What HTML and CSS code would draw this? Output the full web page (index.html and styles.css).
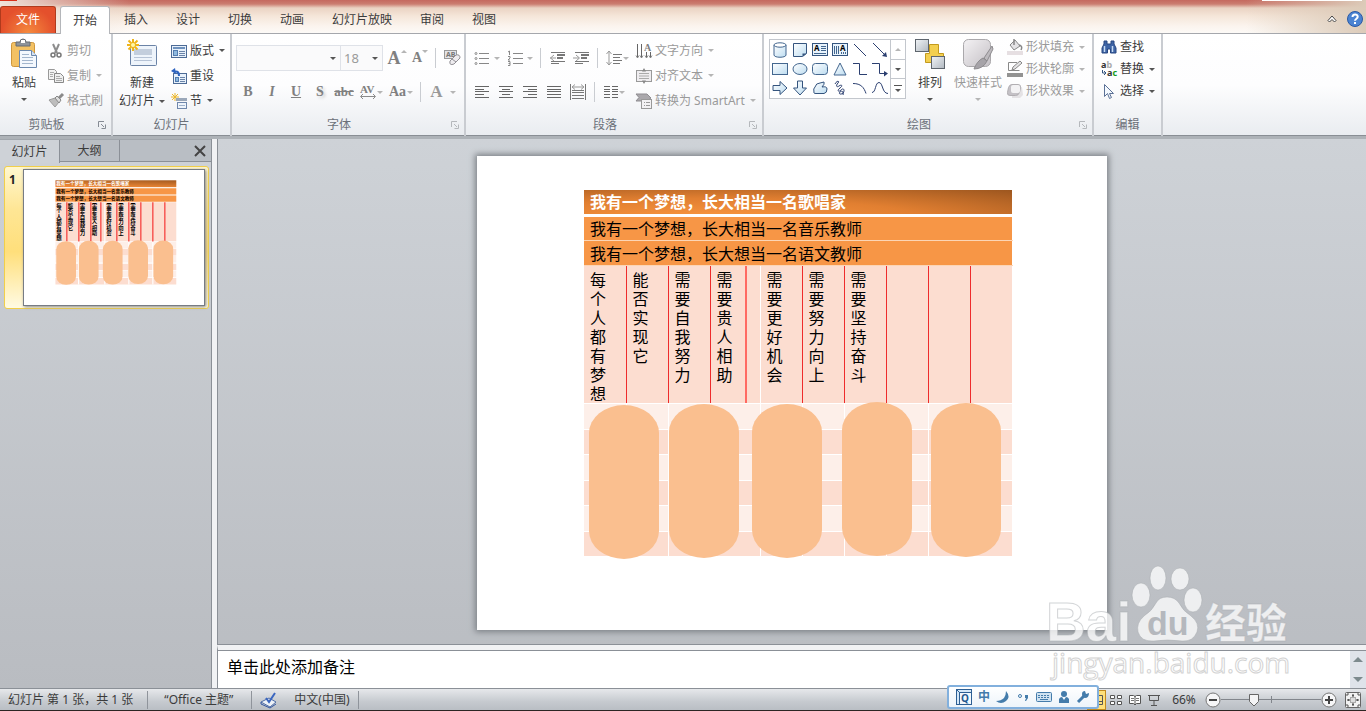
FILE: index.html
```
<!DOCTYPE html>
<html lang="zh-CN">
<head>
  <meta charset="UTF-8" />
  <meta name="viewport" content="width=device-width, initial-scale=1.0"/>
  <title>幻灯片</title>
  <link rel="stylesheet" href="styles.css">
</head>
<body>
  <svg class="defs" width="0" height="0">
    <symbol id="launcher" viewBox="0 0 8 8"><path d="M.5 6V.5H6" fill="none" stroke="currentColor"/><path d="M3 3l3 3M7.5 3.500v4h-4" fill="none" stroke="currentColor"/></symbol>
    <linearGradient id="blue" x2="1" y2="1"><stop offset="0" stop-color="#fff"/><stop offset="1" stop-color="#bcdcf0"/></linearGradient>
    <linearGradient id="grey" x2="1" y2="1"><stop offset="0" stop-color="#f4f2f4"/><stop offset="1" stop-color="#c4c0c5"/></linearGradient>
    <linearGradient id="silver" x2="1" y2="1"><stop offset="0" stop-color="#f1f4f7"/><stop offset="1" stop-color="#b1b8c0"/></linearGradient>
  </svg>

  <!-- Tabs -->
  <header class="tabbar">
    <nav class="tabs">
      <button class="tab file">文件</button>
      <button class="tab active">开始</button>
      <button class="tab">插入</button>
      <button class="tab">设计</button>
      <button class="tab">切换</button>
      <button class="tab">动画</button>
      <button class="tab">幻灯片放映</button>
      <button class="tab">审阅</button>
      <button class="tab">视图</button>
    </nav>
    <div class="tab-tools">
      <button aria-label="最小化功能区"><svg width="10" height="8" viewBox="0 0 10 8"><path d="M1 5.500L5 1l4 4.500-1.500 1.500L5 4.500 2.500 7z" fill="#fff" stroke="#444"/></svg></button>
      <button aria-label="帮助"><svg width="16" height="16" viewBox="0 0 16 16"><circle cx="8" cy="8" r="7.500" fill="#4b83d2" stroke="#2a59a4"/><path d="M5.500 6C5.500 2.700 10.700 2.700 10.700 5.800 10.700 7.700 8 7.700 8 9.800" fill="none" stroke="#fff" stroke-width="2"/><rect x="7" y="11" width="2" height="2" fill="#fff"/></svg></button>
    </div>
  </header>

  <!-- Ribbon -->
  <div class="ribbon">
    <section class="group clipboard">
      <div class="group-body">
        <button class="big">
          <svg width="28" height="32" viewBox="0 0 28 32"><rect x="1.500" y="4.500" width="23" height="24" rx="2" fill="#f3c163" stroke="#cf973c"/><path d="M6 4h4a3 3 0 0 1 6 0h4v4H6z" fill="#8e949b" stroke="#666c73"/><rect x="11" y="2" width="4" height="3" fill="#fff"/><path d="M9.500 12.500h12l5 5v12h-17z" fill="#f4f8fd" stroke="#6c89ae"/><path d="M21.500 12.500v5h5" fill="#d5e2f2" stroke="#6c89ae"/><path d="M12 16.500h7M12 19.500h11M12 22.500h11M12 25.500h11" stroke="#a3b6cd"/></svg>
          <span>粘贴</span><i class="caret"></i>
        </button>
        <div class="stack">
          <button disabled><svg width="16" height="16" viewBox="0 0 16 16"><path d="M5 1l4 9M11 1L7 10" stroke="#8d8d8d" stroke-width="2"/><circle cx="5" cy="12" r="2" fill="none" stroke="#777" stroke-width="1.500"/><circle cx="11" cy="12" r="2" fill="none" stroke="#777" stroke-width="1.500"/></svg>剪切</button>
          <button disabled><svg width="16" height="16" viewBox="0 0 16 16"><path d="M.5 1.500h6l2 2v8h-8z" fill="#f2f2f2" stroke="#999"/><path d="M6.500 5.500h6l3 3v6h-9z" fill="#eee" stroke="#888"/><path d="M2 4.500h4M2 6.500h3M2 8.500h3M8 8.500h4M8 10.500h6M8 12.500h6" stroke="#aaa"/></svg>复制<i class="caret"></i></button>
          <button disabled><svg width="16" height="16" viewBox="0 0 16 16"><path d="M1 7l6-2 4 4-4 5z" fill="#bdbdbd" stroke="#9c9c9c"/><path d="M7 5l2-2 4 4-2 3z" fill="#ddd" stroke="#888"/><path d="M11 5l4-4" stroke="#8a8a8a" stroke-width="3"/></svg>格式刷</button>
        </div>
      </div>
      <footer><span>剪贴板</span><button aria-label="剪贴板选项"><svg width="8" height="8"><use href="#launcher"/></svg></button></footer>
    </section>

    <section class="group slides">
      <div class="group-body">
        <button class="big new-slide">
          <svg width="32" height="32" viewBox="0 0 32 32"><rect x="4.500" y="7.500" width="26" height="20" rx="1" fill="#eef4fb" stroke="#6b83a6"/><rect x="8" y="11" width="18" height="6" fill="#c3cedd"/><path d="M8 19.500h18M8 22.500h18" stroke="#b6c3d6"/><path d="M7 1v12M1 7h12M2.500 2.500l9 9M11.500 2.500l-9 9" stroke="#efb51c" stroke-width="2"/><circle cx="7" cy="7" r="2" fill="#fff7a8"/></svg>
          <span>新建</span><span class="with-caret">幻灯片<i class="caret"></i></span>
        </button>
        <div class="stack">
          <button><svg width="16" height="16" viewBox="0 0 16 16"><rect x=".5" y="2.500" width="15" height="12" fill="#e8f1fb" stroke="#4d6b96"/><rect x="2" y="4" width="12" height="2" fill="#6f92bd"/><rect x="2.500" y="7.500" width="4" height="5" fill="#8fb9df" stroke="#537db0"/><path d="M8 8.500h6M8 10.500h6M8 12.500h6" stroke="#6a84a9"/></svg>版式<i class="caret"></i></button>
          <button><svg width="16" height="16" viewBox="0 0 16 16"><rect x="2.500" y="5.500" width="13" height="10" fill="#e8f1fb" stroke="#4d6b96"/><rect x="4.500" y="9.500" width="3" height="4" fill="#8fb9df" stroke="#537db0"/><path d="M9 9.500h5M9 11.500h5M9 13.500h5" stroke="#6a84a9"/><path d="M8 8c0-5-3-5-5-4" fill="none" stroke="#2d63c0" stroke-width="2"/><path d="M0 3l4-3 1 6z" fill="#2d63c0"/></svg>重设</button>
          <button><svg width="16" height="16" viewBox="0 0 16 16"><path d="M4 0v8M0 4h8M1 1l6 6M7 1L1 7" stroke="#ecb72a"/><rect x="5" y="5" width="11" height="3" fill="#9aa7b9"/><rect x="6.500" y="9.500" width="9" height="6" fill="#eef4fb" stroke="#6f87ac"/><path d="M8 12.500h6" stroke="#9fb2cc"/></svg>节<i class="caret"></i></button>
        </div>
      </div>
      <footer><span>幻灯片</span></footer>
    </section>

    <section class="group font">
      <div class="group-body rows">
        <div class="row">
          <label class="combo family"><select aria-label="字体" disabled><option></option></select><i class="caret"></i></label>
          <label class="combo size"><select aria-label="字号" disabled><option>18</option></select><i class="caret"></i></label>
          <button class="tool serif grow" aria-label="增大字号" disabled>A<i class="caret up"></i></button>
          <button class="tool serif shrink" aria-label="减小字号" disabled>A<i class="caret"></i></button>
          <i class="rule"></i>
          <button class="tool" aria-label="清除格式" disabled><svg width="18" height="18" viewBox="0 0 18 18"><rect x="1.500" y="1.500" width="12" height="8" fill="#e3e3e6" stroke="#999"/><text x="3" y="8" font-size="7" font-weight="bold" fill="#777">AB</text><path d="M7 12l6-6q4-1 4 3l-6 6q-5 2-4-3z" fill="#eeecef" stroke="#929096"/><path d="M9 10l4 3" stroke="#929096"/></svg></button>
        </div>
        <div class="row">
          <button class="tool serif" disabled>B</button>
          <button class="tool serif italic" disabled>I</button>
          <button class="tool serif underline" disabled>U</button>
          <button class="tool serif shadow" disabled>S</button>
          <button class="tool serif strike" disabled>abc</button>
          <button class="tool wide" aria-label="字符间距" disabled><svg width="16" height="16" viewBox="0 0 16 16"><text class="svg-serif" x="0" y="9" font-size="11">AV</text><path d="M1 12.500h14M3 10l-2.500 2.500L3 15M13 10l2.500 2.500L13 15" fill="none" stroke="#8a8a8a"/></svg><i class="caret"></i></button>
          <button class="tool wide serif change-case" disabled>Aa<i class="caret"></i></button>
          <i class="rule"></i>
          <button class="tool wide serif color" aria-label="字体颜色" disabled>A<i class="caret"></i></button>
        </div>
      </div>
      <footer><span>字体</span><button aria-label="字体选项" disabled><svg width="8" height="8"><use href="#launcher"/></svg></button></footer>
    </section>

    <section class="group paragraph">
      <div class="group-body">
        <div class="rows">
          <div class="row">
            <button class="tool list" aria-label="项目符号" disabled><svg width="16" height="16" viewBox="0 0 16 16"><path d="M5 3.500h10M5 8.500h10M5 13.500h10" stroke="#888"/><g fill="none" stroke="#8a8a8a"><circle cx="2" cy="3.500" r="1"/><circle cx="2" cy="8.500" r="1"/><circle cx="2" cy="13.500" r="1"/></g></svg><i class="caret"></i></button>
            <button class="tool list" aria-label="编号" disabled><svg width="16" height="16" viewBox="0 0 16 16"><path d="M6 3.500h10M6 8.500h10M6 13.500h10" stroke="#888"/><path d="M1 2l1.500-1v4M1 6.500h2v1.500l-2 2h2M1 11.500h2v4h-2M1.500 13.500h1.500" fill="none" stroke="#888"/></svg><i class="caret"></i></button>
            <i class="rule"></i>
            <button class="tool" aria-label="降低列表级别" disabled><svg width="16" height="16" viewBox="0 0 16 16"><path d="M2 2.500h14M2 11.500h14M2 13.500h8" stroke="#777"/><path d="M8 5h8M8 8h6" stroke="#777" stroke-width="2"/><path d="M5 5L1.500 8 5 11M1 8h6" stroke="#999" fill="none"/></svg></button>
            <button class="tool" aria-label="提高列表级别" disabled><svg width="16" height="16" viewBox="0 0 16 16"><path d="M2 2.500h14M2 11.500h14M2 13.500h8" stroke="#777"/><path d="M8 5h8M8 8h6" stroke="#777" stroke-width="2"/><path d="M3 5l3.500 3L3 11M0 8h6" stroke="#999" fill="none"/></svg></button>
            <i class="rule"></i>
            <button class="tool wide" aria-label="行距" disabled><svg width="16" height="16" viewBox="0 0 16 16"><path d="M7 4.500h9M7 7.500h7M7 10.500h9M7 13.500h7" stroke="#777"/><path d="M3 1v14M.5 4L3 1l2.500 3M.5 12L3 15l2.500-3" fill="none" stroke="#999"/></svg><i class="caret"></i></button>
          </div>
          <div class="row">
            <button class="tool" aria-label="左对齐" disabled><svg width="14" height="12" viewBox="0 0 14 12"><path d="M0 .5h14M0 3.500h9M0 5.500h14M0 8.500h9M0 11.500h14" stroke="#666"/></svg></button>
            <button class="tool" aria-label="居中" disabled><svg width="14" height="12" viewBox="0 0 14 12"><path d="M0 .5h14M3 3.500h8M0 5.500h14M3 8.500h8M0 11.500h14" stroke="#666"/></svg></button>
            <button class="tool" aria-label="右对齐" disabled><svg width="14" height="12" viewBox="0 0 14 12"><path d="M0 .5h14M5 3.500h9M0 5.500h14M5 8.500h9M0 11.500h14" stroke="#666"/></svg></button>
            <button class="tool" aria-label="两端对齐" disabled><svg width="14" height="12" viewBox="0 0 14 12"><path d="M0 .5h14M0 3.500h14M0 5.500h14M0 8.500h14M0 11.500h14" stroke="#666"/></svg></button>
            <button class="tool" aria-label="分散对齐" disabled><svg width="16" height="16" viewBox="0 0 16 16"><path d="M.5 0v16M15.500 0v16M2 6.500h12M2 8.500h12M2 11.500h12M2 14.500h12" stroke="#777"/><path d="M2 3h12M5 .5L2 3l3 2.500M11 .5L14 3l-3 2.500" fill="none" stroke="#999"/></svg></button>
            <i class="rule"></i>
            <button class="tool wide" aria-label="分栏" disabled><svg width="14" height="12" viewBox="0 0 14 12"><path d="M0 .5h6M8 .5h6M0 3.500h6M8 3.500h6M0 5.500h6M8 5.500h6M0 8.500h6M8 8.500h6M0 11.500h6M8 11.500h6" stroke="#666"/></svg><i class="caret"></i></button>
          </div>
        </div>
        <div class="stack">
          <button disabled><svg width="16" height="16" viewBox="0 0 16 16"><path d="M1.500 1v14M5.500 1v14M10.500 9v6M14.500 9v6" stroke="#666"/><path d="M0 12.500l1.500 2.500L3 12.500M4 12.500l1.500 2.500L7 12.500M9 12.500l1.500 2.500 1.500-2.500M13 12.500l1.500 2.500 1.500-2.500" stroke="#888" fill="none"/><text class="svg-serif" x="8" y="8" font-size="10">A</text></svg>文字方向<i class="caret"></i></button>
          <button disabled><svg width="16" height="16" viewBox="0 0 16 16"><rect x=".5" y="2.500" width="15" height="11" fill="#efedf0" stroke="#999"/><path d="M3 5.500h10M3 8h10M3 10.500h10" stroke="#aaa"/><path d="M6 3.500L8 0l2 3.500zM6 12.500L8 16l2-3.500z" fill="#888"/></svg>对齐文本<i class="caret"></i></button>
          <button disabled><svg width="16" height="16" viewBox="0 0 16 16"><path d="M0 1h11l4 4-4 3H0l3-3.500z" fill="#aaa8ac" stroke="#8f8d91"/><rect x="5.500" y="6.500" width="10" height="9" fill="#f2f1f3" stroke="#999"/><path d="M8 9.500h1M8 12.500h1M10 9.500h4M10 12.500h4" stroke="#999"/></svg>转换为 SmartArt<i class="caret"></i></button>
        </div>
      </div>
      <footer><span>段落</span><button aria-label="段落选项" disabled><svg width="8" height="8"><use href="#launcher"/></svg></button></footer>
    </section>

    <section class="group drawing">
      <div class="group-body">
        <div class="gallery">
          <div class="shapes">
            <button aria-label="圆柱形"><svg width="16" height="16" viewBox="0 0 16 16"><path d="M2 3v10c0 3 12 3 12 0V3" fill="url(#blue)" stroke="#44678f"/><ellipse cx="8" cy="3" rx="6" ry="2.200" fill="#fff" stroke="#44678f"/></svg></button>
            <button aria-label="折角形"><svg width="16" height="16" viewBox="0 0 16 16"><path d="M1.500 1.500h13v10l-4 3h-9z" fill="url(#blue)" stroke="#34547e"/><path d="M14.500 11.500h-4v3z" fill="#34547e"/></svg></button>
            <button aria-label="文本框"><svg width="16" height="16" viewBox="0 0 16 16"><rect x=".5" y="1.500" width="15" height="12" fill="#e8f3fc" stroke="#34547e"/><text x="2" y="9" font-size="8" font-weight="bold">A</text><path d="M9 4.500h5M9 6.500h5M9 8.500h5M2 11.500h12" stroke="#44678f"/></svg></button>
            <button aria-label="竖排文本框"><svg width="16" height="16" viewBox="0 0 16 16"><rect x=".5" y="1.500" width="15" height="12" fill="#e8f3fc" stroke="#34547e"/><text x="8" y="9" font-size="8" font-weight="bold">A</text><path d="M2.500 4v8M4.500 4v8M6.500 4v8M9.500 10v2M11.500 10v2M13.500 10v2" stroke="#44678f"/></svg></button>
            <button aria-label="直线"><svg width="16" height="16" viewBox="0 0 16 16"><path d="M2 2l12 12" stroke="#2b3f70"/></svg></button>
            <button aria-label="箭头"><svg width="16" height="16" viewBox="0 0 16 16"><path d="M1 1l12 12" stroke="#2b3f70"/><path d="M15 15l-5-1 4-4z" fill="#2b3f70"/></svg></button>
            <button aria-label="矩形"><svg width="16" height="16" viewBox="0 0 16 16"><rect x=".5" y="2.500" width="15" height="11" fill="url(#blue)" stroke="#44678f"/></svg></button>
            <button aria-label="椭圆"><svg width="16" height="16" viewBox="0 0 16 16"><ellipse cx="8" cy="8" rx="7" ry="5.500" fill="url(#blue)" stroke="#44678f"/></svg></button>
            <button aria-label="圆角矩形"><svg width="16" height="16" viewBox="0 0 16 16"><rect x=".5" y="2.500" width="15" height="11" rx="3" fill="url(#blue)" stroke="#44678f"/></svg></button>
            <button aria-label="三角形"><svg width="16" height="16" viewBox="0 0 16 16"><path d="M8 2l6 12H2z" fill="url(#blue)" stroke="#44678f"/></svg></button>
            <button aria-label="肘形连接符"><svg width="16" height="16" viewBox="0 0 16 16"><path d="M1 2.500h6.500v11H15" fill="none" stroke="#2b3f70"/></svg></button>
            <button aria-label="肘形箭头"><svg width="16" height="16" viewBox="0 0 16 16"><path d="M0 2.500h7.500v10H13" fill="none" stroke="#2b3f70"/><path d="M12 10l4 2.500-4 3z" fill="#2b3f70"/></svg></button>
            <button aria-label="右箭头"><svg width="16" height="16" viewBox="0 0 16 16"><path d="M1 5.500h7V1.500L15 8l-7 6.500v-4H1z" fill="url(#blue)" stroke="#34547e"/></svg></button>
            <button aria-label="下箭头"><svg width="16" height="16" viewBox="0 0 16 16"><path d="M5.500 1v7h-4L8 15l6.500-7h-4V1z" fill="url(#blue)" stroke="#34547e"/></svg></button>
            <button aria-label="任意多边形"><svg width="16" height="16" viewBox="0 0 16 16"><path d="M2 13q-1-5 1-6 1-4 5-4l4-1q1 2-2 5 5-1 5 2 0 4-3 4.500H4q-2 0-2-.5z" fill="url(#blue)" stroke="#34547e" stroke-linejoin="round"/></svg></button>
            <button aria-label="自由曲线"><svg width="16" height="16" viewBox="0 0 16 16"><path d="M3 4c2-4 5-3 3-1S4 8 7 6s4 0 1 2-2 5 1 2 4 1 2 3-5 1-3-1 4 0 3 3" fill="none" stroke="#2b3f70"/></svg></button>
            <button aria-label="弧形"><svg width="16" height="16" viewBox="0 0 16 16"><path d="M1 3.500c8 0 11 4 13 10" fill="none" stroke="#2b3f70"/></svg></button>
            <button aria-label="曲线"><svg width="16" height="16" viewBox="0 0 16 16"><path d="M0 12.500c4 0 3-10 7-10s3 11 9 11" fill="none" stroke="#2b3f70"/></svg></button>
          </div>
          <div class="gallery-scroll">
            <button aria-label="上一行" disabled><i class="caret up"></i></button>
            <button aria-label="下一行"><i class="caret"></i></button>
            <button class="more" aria-label="其他"><i class="caret"></i></button>
          </div>
        </div>
        <button class="big">
          <svg width="32" height="32" viewBox="0 0 32 32"><path d="M15.500 6.500h9v9h5v9h-18v-9h4z" fill="#f3cf4f" stroke="#c39a1d"/><rect x="1.500" y="1.500" width="13" height="12" fill="url(#silver)" stroke="#5e656d"/><rect x="17.500" y="18.500" width="13" height="12" fill="url(#silver)" stroke="#5e656d"/></svg>
          <span>排列</span><i class="caret"></i>
        </button>
        <button class="big quick" disabled>
          <svg width="32" height="32" viewBox="0 0 32 32"><rect x="1.500" y="1.500" width="27" height="27" rx="5" fill="url(#grey)" stroke="#aaa8ab"/><path d="M30 8l-8 12 3 3 6-12z" fill="#bdbabe" stroke="#8d8b8e"/><path d="M21 20q-6 3-9 11 9 0 13-8z" fill="#a6a3a8" stroke="#8d8b8e"/></svg>
          <span>快速样式</span><i class="caret"></i>
        </button>
        <div class="stack tight">
          <button disabled><svg width="16" height="16" viewBox="0 0 16 16"><path d="M3 6l5-5 5 6-6 4z" fill="#e4e3e5" stroke="#888"/><path d="M7 0v6M12 6q4 1 2 5" stroke="#888" fill="none" stroke-width="1.500"/><rect y="12" width="16" height="4" fill="#e6dfe2"/></svg>形状填充<i class="caret"></i></button>
          <button disabled><svg width="16" height="16" viewBox="0 0 16 16"><path d="M10 1.500H1.500v8h11" fill="none" stroke="#888"/><path d="M5 9l1-3 7-6 2 2-7 6z" fill="#e4e3e5" stroke="#888"/><rect y="12" width="16" height="4" fill="#929292"/></svg>形状轮廓<i class="caret"></i></button>
          <button disabled><svg width="16" height="16" viewBox="0 0 16 16"><path d="M5 6l10-2 1 8-3 3H5z" fill="#e4e2e5"/><path d="M5 1.500h6q3 0 2.500 3l-1 5q-1 3-4 3H3q-3 0-2.500-3l1-5q1-3 3.500-3z" fill="#c4c1c6" stroke="#b1aeb2"/><rect x="4" y="2" width="9" height="8" rx="2" fill="#f3f2f4"/></svg>形状效果<i class="caret"></i></button>
        </div>
      </div>
      <footer><span>绘图</span><button aria-label="绘图选项" disabled><svg width="8" height="8"><use href="#launcher"/></svg></button></footer>
    </section>

    <section class="group editing">
      <div class="group-body">
        <div class="stack tight">
          <button><svg width="16" height="16" viewBox="0 0 16 16"><path d="M3 2h3v3h4V2h3v3l2 4v5H9.500v-4h-3v4H1V9l2-4z" fill="#3e64a5" stroke="#274680"/><path d="M3.500 7v6M11.500 7v6" stroke="#c8dcf4" stroke-width="1.500"/></svg>查找</button>
          <button><svg width="16" height="18" viewBox="0 0 16 18"><g font-size="9" font-weight="bold"><text x="0" y="8" fill="#333">a<tspan fill="#aaa">b</tspan></text><text x="6" y="16" fill="#333">a<tspan fill="#159a1a">c</tspan></text></g><path d="M1.500 10v3H4M3 11l2 2-2 2" fill="none" stroke="#34547e"/></svg>替换<i class="caret"></i></button>
          <button><svg width="16" height="16" viewBox="0 0 16 16"><path d="M3.500 1.500v12l3-3 2 5 2-1-2-4h4z" fill="#f4f9ff" stroke="#5b7196"/></svg>选择<i class="caret"></i></button>
        </div>
      </div>
      <footer><span>编辑</span></footer>
    </section>
  </div>

  <!-- Workspace -->
  <main class="workspace">
    <aside class="panel">
      <div class="panel-tabs">
        <button class="active">幻灯片</button>
        <button>大纲</button>
        <button class="close" aria-label="关闭"><svg width="12" height="12" viewBox="0 0 12 12"><path d="M1 1l10 10M11 1L1 11" stroke="#444" stroke-width="2"/></svg></button>
      </div>
      <a class="thumb" href="#slide">
        <span>1</span>
        <svg class="thumb-page" viewBox="0 0 630 474">
          <defs><linearGradient id="head" x1="0.600" y1="1" x2="1" y2="0"><stop offset="0" stop-color="#ee8836"/><stop offset="1" stop-color="#a35a20"/></linearGradient></defs>
          <rect x="110" y="36" width="423" height="24" fill="url(#head)"/>
          <path d="M110 64h423v22H110zM110 89h423v22H110z" fill="#f79646"/>
          <path d="M110 113h423v136H110zM110 276h423v23H110zM110 328h423v22H110zM110 378h423v23H110z" fill="#fcddd0"/>
          <path d="M110 251h423v23H110zM110 301h423v23H110zM110 352h423v23H110z" fill="#fdefe9"/>
          <path d="M191 251v150M283 113v288M367 251v150M451 251v150" stroke="#fff" stroke-width="4"/>
          <path d="M150 113v137M192 113v137M234 113v137M269 113v137M325 113v137M367 113v137M409 113v137M451 113v137M493 113v137" stroke="#f52f2f" stroke-width="4"/>
          <g class="thumb-line">
            <text x="113" y="53" fill="#fff">我有一个梦想，长大相当一名歌唱家</text>
            <text x="113" y="80">我有一个梦想，长大相当一名音乐教师</text>
            <text x="113" y="106">我有一个梦想，长大想当一名语文教师</text>
          </g>
          <g class="thumb-column">
            <text x="122" y="116">每个人都有梦想</text>
            <text x="163" y="116">能否实现它</text>
            <text x="205" y="116">需要自我努力</text>
            <text x="247" y="116">需要贵人相助</text>
            <text x="297" y="116">需要更好机会</text>
            <text x="339" y="116">需要努力向上</text>
            <text x="381" y="116">需要坚持奋斗</text>
          </g>
          <g fill="#fabf8f">
            <rect x="113" y="249" width="69" height="153" rx="34" ry="28"/>
            <rect x="192" y="248" width="69" height="153" rx="34" ry="28"/>
            <rect x="276" y="248" width="69" height="153" rx="34" ry="28"/>
            <rect x="365" y="246" width="69" height="153" rx="34" ry="28"/>
            <rect x="453" y="247" width="69" height="153" rx="34" ry="28"/>
          </g>
        </svg>
      </a>
    </aside>

    <div class="editor">
      <div class="canvas">
        <article class="slide" id="slide">
          <table>
            <colgroup><col><col><col><col class="broad"><col><col><col><col><col><col></colgroup>
            <tr class="head"><th colspan="10">我有一个梦想，长大相当一名歌唱家</th></tr>
            <tr class="line"><td colspan="10">我有一个梦想，长大相当一名音乐教师</td></tr>
            <tr class="line"><td colspan="10">我有一个梦想，长大想当一名语文教师</td></tr>
            <tr class="columns">
              <td><p>每个人都有梦想</p></td>
              <td><p>能否实现它</p></td>
              <td><p>需要自我努力</p></td>
              <td class="drawn"><p>需要贵人相助</p></td>
              <td><p>需要更好机会</p></td>
              <td><p>需要努力向上</p></td>
              <td><p>需要坚持奋斗</p></td>
              <td></td><td></td><td></td>
            </tr>
            <tr class="pale"><td></td><td></td><td></td><td></td><td></td><td></td><td></td><td></td><td></td><td></td></tr>
            <tr><td></td><td></td><td></td><td></td><td></td><td></td><td></td><td></td><td></td><td></td></tr>
            <tr class="pale"><td></td><td></td><td></td><td></td><td></td><td></td><td></td><td></td><td></td><td></td></tr>
            <tr><td></td><td></td><td></td><td></td><td></td><td></td><td></td><td></td><td></td><td></td></tr>
            <tr class="pale"><td></td><td></td><td></td><td></td><td></td><td></td><td></td><td></td><td></td><td></td></tr>
            <tr><td></td><td></td><td></td><td></td><td></td><td></td><td></td><td></td><td></td><td></td></tr>
          </table>
          <div class="pill p1"></div>
          <div class="pill p2"></div>
          <div class="pill p3"></div>
          <div class="pill p4"></div>
          <div class="pill p5"></div>
        </article>
      </div>
      <div class="notes">
        <textarea aria-label="备注" placeholder="单击此处添加备注"></textarea>
        <div class="notes-scroll">
          <button aria-label="向上"><i class="caret up"></i></button>
          <button aria-label="向下"><i class="caret"></i></button>
        </div>
      </div>
    </div>
  </main>

  <!-- Status bar -->
  <footer class="status">
    <span class="cell">幻灯片 第 1 张，共 1 张</span>
    <span class="cell theme">“Office 主题”</span>
    <span class="cell lang">
      <svg width="18" height="16" viewBox="0 0 18 16"><path d="M1 10l8-4 7 4-6 5z" fill="#eef2f8" stroke="#4f6da5"/><path d="M1 10v2l9 4 6-4" fill="none" stroke="#3558a2"/><path d="M6 6l3 4 6-9" fill="none" stroke="#3b67c0" stroke-width="2"/></svg>
      中文(中国)
    </span>
    <div class="views">
      <button class="on" aria-label="普通视图"><svg width="12" height="12" viewBox="0 0 12 12"><path d="M.5 1.500h11v9H.5zM4.500 1.500v9M4.500 7.500h7" fill="none" stroke="#555"/></svg></button>
      <button aria-label="幻灯片浏览"><svg width="12" height="12" viewBox="0 0 12 12"><path d="M.5 1.500h4v3h-4zM7.500 1.500h4v3h-4zM.5 7.500h4v3h-4zM7.500 7.500h4v3h-4z" fill="#fff" stroke="#555"/></svg></button>
      <button aria-label="阅读视图"><svg width="12" height="12" viewBox="0 0 12 12"><path d="M.5 1.500h4L6 2.500l1.500-1h4v8h-4L6 11 4.500 9.500h-4zM6 2v9" fill="#fff" stroke="#555"/><path d="M2 4.500h3M2 6.500h3M7 4.500h3M7 6.500h3" stroke="#777"/></svg></button>
      <button aria-label="幻灯片放映"><svg width="12" height="12" viewBox="0 0 12 12"><path d="M0 1.500h12M1.500 1.500v5h9v-5M6 7v4M3 11.500h6" fill="none" stroke="#555"/></svg></button>
    </div>
    <button class="percent">66%</button>
    <button class="round" aria-label="缩小"><svg width="16" height="16" viewBox="0 0 16 16"><circle cx="8" cy="8" r="7" fill="#f6f6f7" stroke="#777"/><path d="M4 8h8" stroke="#444" stroke-width="2"/></svg></button>
    <input class="zoom" type="range" min="0" max="100" value="31" aria-label="显示比例">
    <button class="round" aria-label="放大"><svg width="16" height="16" viewBox="0 0 16 16"><circle cx="8" cy="8" r="7" fill="#f6f6f7" stroke="#777"/><path d="M4 8h8M8 4v8" stroke="#444" stroke-width="2"/></svg></button>
    <button class="fit" aria-label="使幻灯片适应当前窗口"><svg width="16" height="16" viewBox="0 0 16 16"><rect x=".5" y=".5" width="15" height="15" rx="1" fill="#f2f2f2" stroke="#666"/><rect x="5.500" y="5.500" width="5" height="5" fill="#ddd" stroke="#aaa"/><path d="M8 2v3M8 11v3M2 8h3M11 8h3" stroke="#333"/><path d="M7 3.500h2M7 12.500h2M3.500 7v2M12.500 7v2M2 4V2h2M12 2h2v2M2 12v2h2M12 14h2v-2" fill="none" stroke="#555"/></svg></button>
  </footer>

  <!-- Input method bar -->
  <div class="ime">
    <svg width="16" height="16" viewBox="0 0 16 16"><rect x=".5" y=".5" width="15" height="15" fill="#d5e8f8" stroke="#2d5f94"/><path d="M1 1l3 3" stroke="#2d5f94"/><rect x="3.500" y="3.500" width="12" height="12" fill="#f2f8fd" stroke="#2d5f94"/><text x="5" y="13" font-size="10" fill="#24598f">Q</text></svg>
    <span>中</span>
    <svg width="14" height="14" viewBox="0 0 14 14"><path d="M10 1q5 6 0 10-5 4-10 0 5 0 8-3 2-3 2-7z" fill="#447cab"/></svg>
    <svg width="14" height="14" viewBox="0 0 14 14"><circle cx="4" cy="6" r="1.500" fill="none" stroke="#447cab"/><path d="M9 5h3v3l-2 3H9l1-3H9z" fill="#447cab"/></svg>
    <svg width="16" height="12" viewBox="0 0 16 12"><rect x=".5" y="1.500" width="15" height="9" rx="1" fill="#cfe2f1" stroke="#447cab"/><path d="M2 4.500h12M2 6.500h12" stroke="#447cab" stroke-dasharray="2 1"/><path d="M4 8.500h8" stroke="#447cab"/></svg>
    <svg width="12" height="14" viewBox="0 0 12 14"><circle cx="6" cy="4" r="3" fill="#447cab"/><path d="M1 13V9q1-2 3-2l2 3 2-3q2 0 3 2v4z" fill="#447cab"/></svg>
    <svg width="14" height="14" viewBox="0 0 14 14"><path d="M2 12l7-7" stroke="#447cab" stroke-width="3"/><path d="M13 3l-3 1-1-3q-3 0-3 3t3 4q4 0 4-5z" fill="#447cab"/></svg>
  </div>

  <!-- Watermark -->
  <svg class="watermark" width="260" height="130" viewBox="0 0 260 130">
    <g class="mark">
      <text x="4" y="85" font-size="55">Bai</text>
      <ellipse cx="99" cy="39" rx="9" ry="12"/>
      <ellipse cx="116" cy="22" rx="8" ry="12"/>
      <ellipse cx="138" cy="23" rx="9" ry="11"/>
      <ellipse cx="151" cy="44" rx="9" ry="12"/>
      <path d="M125 41q8 0 12 6 4 8 12 13 9 7 6 16-4 10-15 9-15-2-28 0-13 1-16-9-2-9 6-16 8-5 12-13 3-6 11-6z"/>
      <text class="cjk" x="163" y="82" font-size="41">经验</text>
    </g>
    <text class="du" x="105" y="79" font-size="34">du</text>
    <text class="url" x="10" y="117" font-size="28">jingyan.baidu.com</text>
  </svg>
</body>
</html>
```
FILE: styles.css
```
:root {
  --text: #3b3b3b;
  --muted: #9a9a9a;
  --line: #8b9097;
  --orange: #f79646;
  --pill: #fabf8f;
  --cell: #fcddd0;
  --cell-pale: #fdefe9;
}
* {
  box-sizing: border-box;
}
body {
  margin: 0;
  height: 100vh;
  display: flex;
  flex-direction: column;
  overflow: hidden;
  position: relative;
  font-family: "Noto Sans", "Noto Sans CJK SC", sans-serif;
  font-size: 12px;
  line-height: 16px;
  color: var(--text);
}
button {
  font: inherit;
  color: inherit;
  background: none;
  border: none;
  padding: 0;
  display: flex;
  align-items: center;
  white-space: nowrap;
}
button:disabled {
  color: var(--muted);
}
svg {
  display: block;
  flex: none;
  overflow: visible;
}
.defs {
  position: absolute;
}
.caret {
  flex: none;
  border: 3px solid transparent;
  border-top-color: #555;
  border-bottom: 0;
}
.caret.up {
  border-top: 0;
  border-bottom: 3px solid #777;
}
button:disabled .caret {
  border-top-color: #b5b5b5;
}
button:disabled .caret.up {
  border-bottom-color: #b5b5b5;
}

/* tabs */
.tabbar {
  flex: none;
  height: 34px;
  display: flex;
  justify-content: space-between;
  align-items: flex-end;
  border-bottom: 1px solid #a5a7ac;
  background:
    linear-gradient(#d8301a, #d8301a) 0 0 / 17px 1px no-repeat,
    linear-gradient(#fff, #fff) right 4px top / 100px 1px no-repeat,
    linear-gradient(90deg, #efe3da 0, #eee1d600 130px, #eee1d600 calc(100% - 120px), #dccbb9 100%),
    linear-gradient(#c5695f 0, #cb7d70 4px, #ead3c3 8px, #f5e6d9 16px, #fbf4ee 26px, #fdfaf7 33px);
}
.tabs {
  display: flex;
}
.tab {
  height: 27px;
  padding: 0 14px;
}
.tab.file {
  width: 56px;
  margin-right: 4px;
  justify-content: center;
  color: #fff;
  border: 1px solid #b03a1c;
  border-bottom: 0;
  border-radius: 3px 3px 0 0;
  background: radial-gradient(ellipse at bottom, #f58a3e, #e4502c 70%);
}
.tab.active {
  height: 28px;
  margin-bottom: -1px;
  padding: 0 12px;
  background: #fff;
  border: 1px solid #b4b6ba;
  border-bottom: 0;
  border-radius: 3px 3px 0 0;
}
.tab-tools {
  height: 28px;
  display: flex;
  gap: 10px;
  padding-right: 3px;
}

/* ribbon */
.ribbon {
  flex: none;
  height: 105px;
  display: flex;
  background: linear-gradient(#fff, #fdfdfe 50%, #e9ecf0);
  border-bottom: 3px solid #adb2b7;
  box-shadow: inset 0 -1px #898e94;
}
.group {
  display: flex;
  flex-direction: column;
  padding-bottom: 1px;
  border-right: 2px solid #c9ccd1;
}
.group-body {
  flex: 1;
  display: flex;
  padding-top: 4px;
}
.group footer {
  height: 21px;
  display: flex;
  align-items: center;
  color: #6b7079;
}
.group footer span {
  flex: 1;
  text-align: center;
}
.group footer button {
  width: 18px;
  justify-content: center;
  color: #858b94;
}
.group footer button:disabled {
  color: #b5b8bc;
}
.clipboard { width: 113px; }
.slides { width: 119px; }
.font { width: 234px; }
.paragraph { width: 298px; }
.drawing { width: 330px; }
.editing { width: 69px; }

.big {
  flex-direction: column;
  align-self: flex-start;
  width: 48px;
}
.big span {
  margin-top: 4px;
  line-height: 18px;
}
.big .caret {
  margin-top: 6px;
}
.big.new-slide {
  width: 58px;
}
.big .with-caret {
  display: flex;
  align-items: center;
  gap: 4px;
  margin: 0;
}
.big .with-caret .caret {
  margin: 0;
}
.stack {
  display: flex;
  flex-direction: column;
}
.stack button {
  height: 25px;
  gap: 3px;
}
.stack.tight button {
  height: 22px;
}
.stack .caret {
  margin-left: 2px;
}
.rows {
  display: flex;
  flex-direction: column;
  gap: 10px;
  padding-top: 8px;
}
.row {
  display: flex;
  align-items: center;
  height: 24px;
}
.group-body.rows {
  padding: 12px 0 0 4px;
}
.tool {
  width: 24px;
  height: 24px;
  justify-content: center;
}
button.tool {
  color: #808080;
}
.tool.wide {
  width: 30px;
  gap: 1px;
}
.tool.list {
  width: 33px;
  gap: 4px;
}
.rule {
  width: 1px;
  height: 20px;
  margin: 0 4px;
  background: #c9ccd1;
}
.serif, .svg-serif {
  font-family: "Liberation Serif", serif;
  font-weight: bold;
}
.svg-serif {
  fill: #808080;
}
.tool.serif {
  font-size: 14px;
}
.tool.italic { font-style: italic; }
.tool.underline { text-decoration: underline; }
.tool.strike {
  font-size: 13px;
  text-decoration: line-through;
}
.tool.shadow {
  text-shadow: 2px 2px 3px #ccc;
}
.tool.serif.grow {
  width: 24px;
  font-size: 18px;
  margin-left: 2px;
}
.tool.shrink {
  width: 22px;
}
.grow .caret, .shrink .caret {
  align-self: flex-start;
  margin-top: 4px;
}
.tool.serif.color {
  width: 36px;
  font-size: 17px;
  gap: 7px;
  color: #999;
}
.combo {
  display: flex;
  align-items: center;
  height: 26px;
  padding-right: 4px;
  border: 1px solid #dfe2e8;
  background: #fafafb;
}
.combo select {
  flex: 1;
  min-width: 0;
  appearance: none;
  border: 0;
  padding: 0 3px;
  background: none;
  font: inherit;
  color: var(--muted);
  opacity: 1;
}
.combo.family { width: 105px; }
.combo.size {
  width: 43px;
  font-size: 13px;
  margin-left: -1px;
}
.paragraph .rows {
  width: 170px;
  padding-left: 4px;
}

.gallery {
  display: flex;
  align-self: flex-start;
  margin: 1px 0 0 5px;
  width: 137px;
  height: 60px;
  border: 1px solid #c3c7cd;
  background: #fff;
}
.shapes {
  flex: 1;
  display: grid;
  grid-template-columns: repeat(6, 20px);
  grid-template-rows: repeat(3, 1fr);
}
.shapes button {
  justify-content: center;
}
.gallery-scroll {
  width: 15px;
  display: flex;
  flex-direction: column;
  border-left: 1px solid #c3c7cd;
}
.gallery-scroll button {
  flex: 1;
  justify-content: center;
  border-bottom: 1px solid #c3c7cd;
}
.gallery-scroll button:last-child {
  border-bottom: 0;
}
.more {
  flex-direction: column;
}
.more::before {
  content: "";
  width: 8px;
  height: 1px;
  margin-bottom: 3px;
  background: #555;
}
.drawing .tight {
  margin-left: 5px;
}
.drawing .tight,
.editing .tight {
  margin-top: -2px;
}
.editing .tight {
  margin-left: 7px;
}

/* workspace */
.workspace {
  flex: 1;
  min-height: 0;
  display: flex;
  background: linear-gradient(#ced2d7, #b9bcc1);
}
.panel {
  width: 212px;
}
.panel-tabs {
  display: flex;
  height: 23px;
  background: #b9bec4;
  border-bottom: 1px solid var(--line);
  border-top: 1px solid #a1a6ac;
}
.panel-tabs button {
  width: 60px;
  justify-content: center;
  border-right: 1px solid var(--line);
}
.panel-tabs .active {
  height: 23px;
  background: #ced2d7;
}
.panel-tabs .close {
  width: 24px;
  margin-left: auto;
  border: 0;
}
.thumb {
  display: flex;
  gap: 7px;
  margin: 4px 3px 0 4px;
  padding: 2px 3px 2px 4px;
  border: 1px solid #f1cf4a;
  border-radius: 3px;
  background: linear-gradient(#fff7cf, #fee695 30%, #ffdf7b 60%, #fffbe3);
  color: #222;
  font-weight: bold;
  text-decoration: none;
}
.thumb span {
  width: 7px;
  padding-top: 3px;
}
.thumb-page {
  flex: 1;
  min-width: 0;
  background: #fff;
  border: 1px solid #777c84;
  box-shadow: 1px 1px 3px #888;
}
.thumb-line, .thumb-column {
  font-family: "Noto Sans CJK SC", sans-serif;
  font-weight: bold;
}
.thumb-line {
  font-size: 16px;
}
.thumb-column {
  font-size: 19px;
  writing-mode: vertical-rl;
}

.editor {
  flex: 1;
  min-width: 0;
  display: flex;
  flex-direction: column;
  border-left: 5px solid #f1f2f4;
  box-shadow: inset 1px 0 var(--line), -1px 0 var(--line);
}
.canvas {
  flex: 1;
  display: flex;
  align-items: center;
  justify-content: center;
  padding-top: 2px;
  border-left: 1px solid var(--line);
  border-bottom: 1px solid var(--line);
}
.slide {
  position: relative;
  width: 630px;
  aspect-ratio: 630 / 474;
  padding: 34px 95px 0 107px;
  background: #fff;
  box-shadow: 0 0 6px 2px #7d8287;
}
.slide table {
  width: 428px;
  table-layout: fixed;
  border-collapse: collapse;
  font-family: "Noto Sans CJK SC", sans-serif;
  font-size: 16px;
  line-height: 19px;
  color: #000;
}
.slide col { width: 42px; }
.slide col.broad { width: 50px; }
.slide tr { height: 25px; }
.slide th, .slide td {
  padding: 0 6px;
  text-align: left;
  background: var(--cell);
  border: 1px solid #fff;
  border-width: 0 1px 1px 0;
}
.slide .head, .slide .pale {
  height: 26px;
}
.slide .head th {
  color: #fff;
  background: radial-gradient(ellipse at 30% 120%, #fb9740, #e17f31 50%, #9c561f);
  border-bottom-width: 3px;
}
.slide .line td {
  background: var(--orange);
  border-bottom: 1px solid #fcd5b5;
}
.slide .pale td {
  background: var(--cell-pale);
}
.slide .columns td {
  height: 138px;
  padding-top: 4px;
  vertical-align: top;
  border-right-color: #ee2b2b;
}
.slide .columns td:last-child {
  border-right-color: #fff;
}
.slide .columns .drawn {
  position: relative;
  border-right-color: #fff;
}
.drawn::after {
  content: "";
  position: absolute;
  top: 0;
  bottom: 0;
  left: 34px;
  width: 2px;
  background: #ff6a62;
}
.columns p {
  width: 17px;
  margin: 0;
  word-break: break-all;
}
.pill {
  position: absolute;
  width: 70px;
  height: 154px;
  border-radius: 35px / 28px;
  background: var(--pill);
}
.p1 { left: 112px; top: 249px; }
.p2 { left: 192px; top: 248px; }
.p3 { left: 275px; top: 248px; }
.p4 { left: 365px; top: 246px; }
.p5 { left: 454px; top: 247px; }

.notes {
  display: flex;
  height: 43px;
  border-top: 5px solid #f1f2f4;
  border-left: 1px solid var(--line);
  background: #fff;
}
.notes textarea {
  flex: 1;
  border: 0;
  border-top: 1px solid var(--line);
  outline: 0;
  resize: none;
  padding: 5px 9px;
  font: 16px/20px "Noto Sans CJK SC", sans-serif;
}
.notes textarea::placeholder {
  color: #000;
}
.notes-scroll {
  width: 16px;
  display: flex;
  flex-direction: column;
  justify-content: space-between;
  align-items: center;
  padding: 6px 0;
  border-top: 1px solid var(--line);
  background: #dfe3ea;
}
.notes-scroll .caret {
  border-width: 5px;
  border-top-color: #7d8a8e;
  border-bottom: 0;
}
.notes-scroll .caret.up {
  border-top: 0;
  border-bottom: 5px solid #7d8a8e;
}

/* status bar */
.status {
  flex: none;
  height: 23px;
  display: flex;
  align-items: center;
  padding-right: 5px;
  border-top: 1px solid var(--line);
  border-bottom: 1px solid #2c2522;
  background: linear-gradient(#e6e8eb, #c6cacf 60%, #b9bec4);
}
.cell {
  display: flex;
  align-items: center;
  gap: 16px;
  height: 18px;
  padding: 0 14px 0 8px;
  border-right: 1px solid #8f949b;
}
.cell.theme {
  padding: 0 18px 0 16px;
}
.cell.lang {
  padding-right: 8px;
}
.views {
  display: flex;
  margin-left: auto;
}
.views button {
  width: 19px;
  height: 20px;
  justify-content: center;
}
.views .on {
  background: #ffe07a;
  border: 1px solid #c28a1f;
}
.percent {
  width: 42px;
  justify-content: center;
}
.zoom {
  appearance: none;
  width: 100px;
  height: 16px;
  margin: 0;
  background:
    linear-gradient(#82868c, #82868c) center / 1px 7px no-repeat,
    linear-gradient(#82868c, #82868c) center / 100% 1px no-repeat;
}
.zoom::-webkit-slider-thumb {
  appearance: none;
  width: 10px;
  height: 14px;
  background: url("data:image/svg+xml,%3Csvg xmlns='http://www.w3.org/2000/svg' width='10' height='14'%3E%3Cpath d='M.5 1.5h9v7L5 13 .5 8.500z' fill='%23f4f4f5' stroke='%23666'/%3E%3C/svg%3E") no-repeat;
}
.fit {
  margin-left: 8px;
}

/* floating bars */
.ime {
  position: absolute;
  right: 267px;
  bottom: 2px;
  width: 152px;
  height: 24px;
  display: flex;
  align-items: center;
  justify-content: space-between;
  padding: 0 7px;
  border: 2px solid #82b0dd;
  border-radius: 3px;
  background: linear-gradient(#fff, #edf4fa);
  color: #447cab;
  font-weight: bold;
}
.watermark {
  position: absolute;
  right: 64px;
  bottom: 25px;
  pointer-events: none;
}
.mark {
  fill: #fff;
  fill-opacity: 0.75;
  stroke: #a8abb0;
  stroke-opacity: 0.5;
  font-family: "Liberation Sans", sans-serif;
  font-weight: bold;
}
.mark .cjk {
  font-family: "Noto Sans CJK SC", sans-serif;
  font-weight: 900;
}
.du {
  fill: #b5b8bd;
  font-family: "Liberation Sans", sans-serif;
  font-weight: bold;
}
.url {
  fill: #fff;
  stroke: #d3d3d3;
  font-family: "Open Sans", sans-serif;
}
```
